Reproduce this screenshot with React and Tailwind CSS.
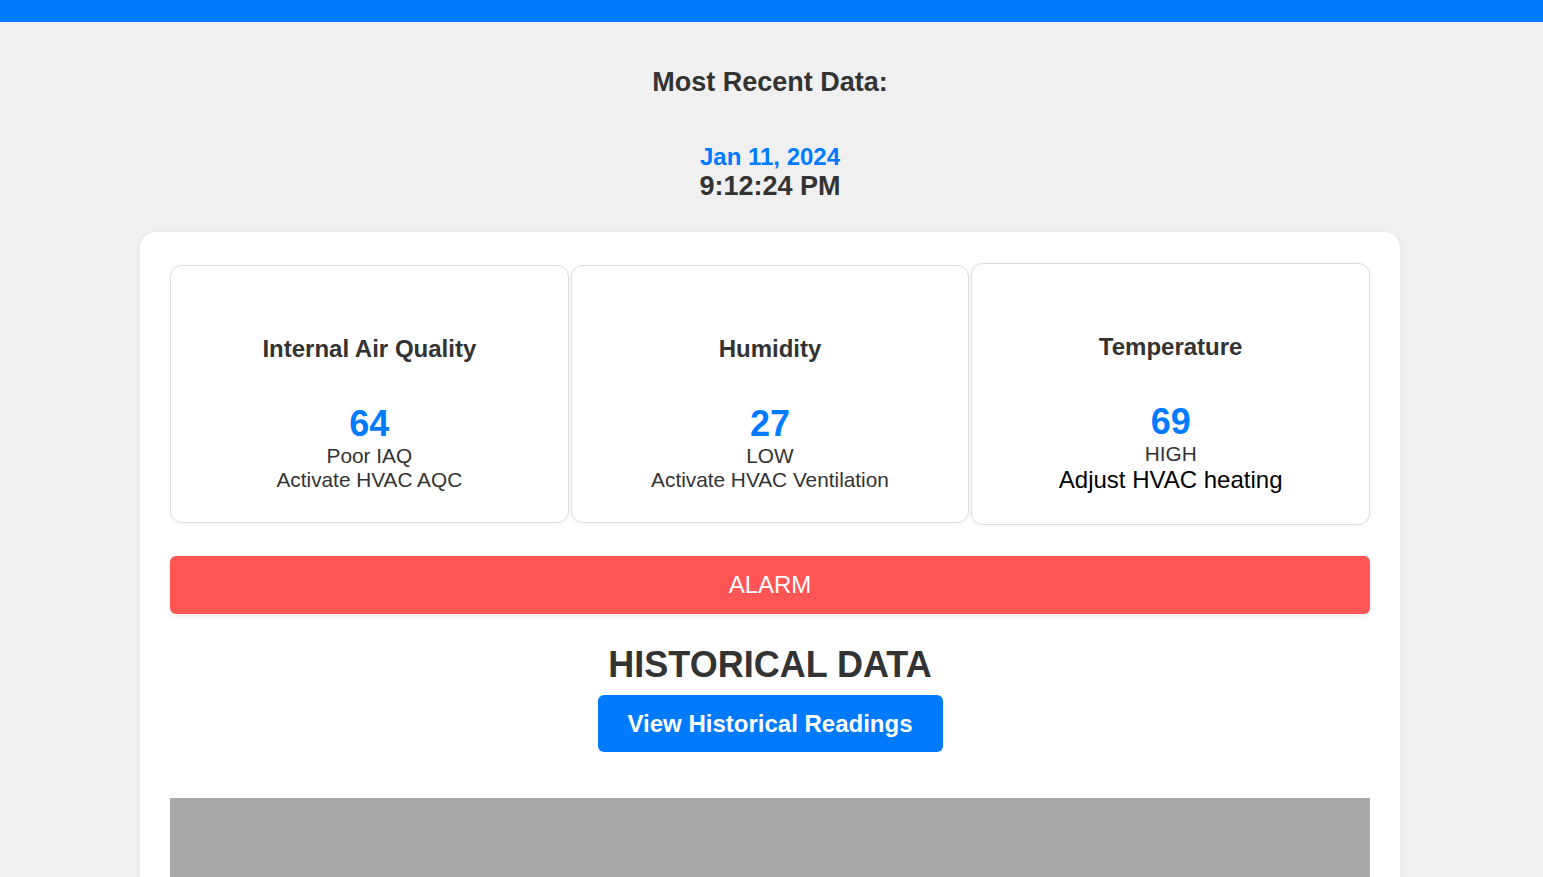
import React from 'react';

const readings = [
    { title: 'Internal Air Quality', value: 64, status: 'Poor IAQ', action: 'Activate HVAC AQC', big: false },
    { title: 'Humidity', value: 27, status: 'LOW', action: 'Activate HVAC Ventilation', big: false },
    { title: 'Temperature', value: 69, status: 'HIGH', action: 'Adjust HVAC heating', big: true },
];

const ReadingCard = ({ title, value, status, action, big }) => (
    <div className="flex flex-col items-center bg-white border border-[#dddddd] rounded-[12px] shadow-[0_1px_4px_rgba(0,0,0,0.06)] pt-[69px] pb-[30px] text-center">
        <h3 className="text-[24px] leading-[28px] font-bold text-[#333333]">{title}</h3>
        <div className="mt-[41px] text-[36px] leading-[40px] font-bold text-[#007bff]">{value}</div>
        <div className="text-[20.8px] leading-[24px] text-[#333333]">{status}</div>
        {big ? (
            <div className="text-[24px] leading-[28px] text-black">{action}</div>
        ) : (
            <div className="text-[20.8px] leading-[24px] text-[#333333]">{action}</div>
        )}
    </div>
);

export default function App() {
    return (
        <div className="min-h-screen bg-[#f0f0f0] font-['Liberation_Sans',Arial,sans-serif] text-[#333333] overflow-hidden">
            <div className="h-[22px] bg-[#007bff]" />

            <div className="flex flex-col items-center pr-[3px]">
                <h2 className="mt-[44px] text-[27px] leading-[32px] font-bold">Most Recent Data:</h2>
                <div className="mt-[45px] text-[24px] leading-[28px] font-bold text-[#007bff]">Jan 11, 2024</div>
                <div className="mt-[1px] text-[27px] leading-[28px] font-bold">9:12:24 PM</div>
            </div>

            <div className="ml-[140px] w-[1260px] mt-[32px] bg-white rounded-[16px] shadow-[0_2px_10px_rgba(0,0,0,0.05)] px-[30px] pt-[31px] pb-[30px]">
                <div className="grid grid-cols-3 gap-[2px] items-center">
                    {readings.map((r) => (
                        <ReadingCard key={r.title} {...r} />
                    ))}
                </div>

                <div className="mt-[31px] h-[58px] flex items-center justify-center bg-[#ff5555] rounded-[6px] shadow-[0_2px_6px_rgba(0,0,0,0.08)] text-white text-[24px]">
                    ALARM
                </div>

                <div className="flex flex-col items-center">
                    <h2 className="mt-[31px] text-[36px] leading-[40px] font-bold text-[#333333]">HISTORICAL DATA</h2>
                    <button className="mt-[10px] h-[57px] px-[30px] bg-[#007bff] text-white text-[24px] font-bold rounded-[6px]">
                        View Historical Readings
                    </button>
                </div>

                <div className="mt-[46px] h-[300px] bg-[#a9a9a9]" />
            </div>
        </div>
    );
}
